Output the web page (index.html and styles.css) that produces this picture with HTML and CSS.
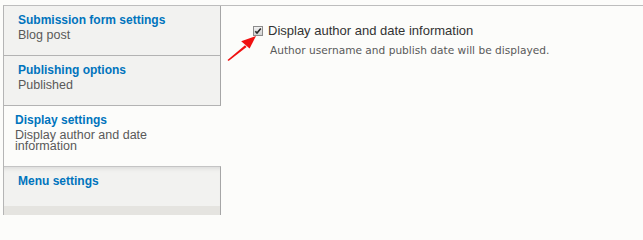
FILE: index.html
```html
<!DOCTYPE html>
<html>
<head>
<meta charset="utf-8">
<link rel="stylesheet" href="styles.css">
</head>
<body>
<div class="vt">
  <ul class="tabs">
    <li class="tab">
      <div class="title">Submission form settings</div>
      <div class="summary">Blog post</div>
    </li>
    <li class="tab">
      <div class="title">Publishing options</div>
      <div class="summary">Published</div>
    </li>
    <li class="tab active">
      <div class="title">Display settings</div>
      <div class="summary narrow">Display author and date information</div>
    </li>
    <li class="tab last">
      <div class="title">Menu settings</div>
    </li>
    <li class="band"></li>
  </ul>
  <div class="pane">
    <div class="row">
      <span class="check">
        <svg width="10" height="10" viewBox="0 0 10 10">
          <defs>
            <linearGradient id="cb" x1="0" y1="0" x2="0" y2="1">
              <stop offset="0" stop-color="#f4f4f4"/>
              <stop offset="1" stop-color="#cfcfcf"/>
            </linearGradient>
          </defs>
          <rect x="0.5" y="0.5" width="9" height="9" fill="url(#cb)" stroke="#8c8c8c"/>
          <path d="M2.3 5.2 L4 7.1 L7.8 2.4" fill="none" stroke="#2a2a2a" stroke-width="1.6"/>
        </svg>
      </span>
      <label class="label">Display author and date information</label>
    </div>
    <div class="desc">Author username and publish date will be displayed.</div>
    <svg class="arrow" width="36" height="32" viewBox="0 0 36 32">
      <polygon points="3.5,28 21,13.2 22.6,15 4.6,29" fill="#f01010"/>
      <polygon points="32,4 25.6,16.4 17.2,9.2" fill="#f01010"/>
    </svg>
  </div>
</div>
</body>
</html>
```
FILE: styles.css
```css
html, body {
  margin: 0;
  padding: 0;
  background: #fcfcfa;
  overflow: hidden;
}
.vt {
  margin: 5px 0 0 3px;
  border-top: 1px solid #bdbdbd;
  border-left: 1px solid #b5b5b5;
  display: flex;
  height: 209px;
  font-family: "Liberation Sans", Arial, sans-serif;
}
.tabs {
  list-style: none;
  margin: 0;
  padding: 0;
  width: 217px;
  display: flex;
  flex-direction: column;
  flex: none;
}
.tab {
  background: #f2f2f0;
  border-right: 1px solid #a6a6a6;
  border-bottom: 1px solid #b3b3b3;
  padding: 7px 0 14px 14px;
  height: 28px;
}
.title {
  color: #0074bd;
  font-weight: bold;
  font-size: 12px;
  line-height: 15px;
  margin-bottom: 2px;
}
.summary {
  color: #595959;
  font-size: 12.5px;
  line-height: 11px;
}
.narrow {
  width: 150px;
}
.tab.active {
  background: #fcfcfa;
  border-right: 1px solid #fcfcfa;
  border-bottom: none;
  padding-left: 11px;
  padding-bottom: 14px;
  height: 39px;
}
.tab.last {
  border-top: 1px solid #c4c4c4;
  border-bottom: none;
  box-shadow: inset 0 5px 5px -4px rgba(0, 0, 0, 0.12);
  height: 18px;
  padding-left: 14px;
}
.band {
  background: #e5e4e0;
  border-right: 1px solid #a6a6a6;
  flex: 1;
}
.pane {
  flex: 1;
  position: relative;
  padding: 17px 0 0 32px;
}
.row {
  display: flex;
  align-items: flex-start;
}
.check {
  display: block;
  width: 10px;
  height: 10px;
  margin-top: 3px;
  margin-right: 5px;
}
.check svg {
  display: block;
}
.label {
  color: #333;
  font-size: 13px;
  line-height: 15px;
}
.desc {
  color: #595959;
  font-family: "DejaVu Sans", sans-serif;
  font-size: 10.6px;
  line-height: 13px;
  margin-top: 6px;
  margin-left: 17px;
}
.arrow {
  position: absolute;
  left: 3px;
  top: 26px;
}
```
